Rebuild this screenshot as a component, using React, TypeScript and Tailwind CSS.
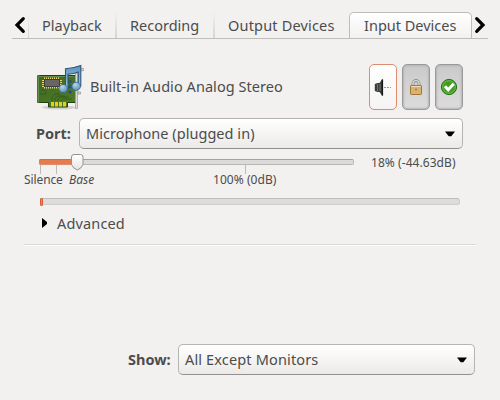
import type { ReactNode } from "react";

function Label({ className = "", children }: { className?: string; children: ReactNode }) {
  return <span className={`block whitespace-nowrap ${className}`}>{children}</span>;
}

function TabArrow({ flip = false }: { flip?: boolean }) {
  return (
    <svg width="12" height="18" viewBox="0 0 12 18" className={flip ? "-scale-x-100" : ""}>
      <path d="M9.300 2.700 3 9l6.300 6.300" fill="none" stroke="#000" strokeWidth="3.200" strokeLinecap="round" />
    </svg>
  );
}

function TabDivider({ className = "" }: { className?: string }) {
  return <div className={`h-[26px] shrink-0 bg-linear-to-b from-[#f2f1f0] to-[#d6d4d2] ${className}`} />;
}

function SoundCardIcon() {
  return (
    <svg width="50" height="48" viewBox="0 0 50 48">
      <defs>
        <linearGradient id="board" x1="0" y1="0" x2="1" y2="1">
          <stop offset="0" stopColor="#3e6723" />
          <stop offset="1" stopColor="#4f7c28" />
        </linearGradient>
        <radialGradient id="note" cx=".4" cy=".3" r=".7">
          <stop offset="0" stopColor="#b9d6ec" />
          <stop offset="1" stopColor="#5b8fba" />
        </radialGradient>
        <linearGradient id="beam" x1="0" y1="0" x2="0" y2="1">
          <stop offset="0" stopColor="#5b93bd" />
          <stop offset="1" stopColor="#a9cbe2" />
        </linearGradient>
      </defs>
      <ellipse cx="23" cy="43.500" rx="17" ry="2" fill="#000" opacity=".13" />
      <path d="M3.500 11.500h36v27h-8v4.500h-19v-4.500h-9z" fill="url(#board)" stroke="#1f420d" />
      <path d="M1.500 11.500h4v27h-4z" fill="#41691f" stroke="#1f420d" strokeWidth=".6" />
      <path d="M2 12h37v26H2z" fill="url(#board)" />
      <path d="M2.500 37.500v-25h35" fill="none" stroke="#668c4b" />
      <path d="M4 30h6v-3M5 26h4M16 37v-4l3-3h5M19 37v-3l3-2h7M22 37v-2l3-2h8M25 37l2-2h9" fill="none" stroke="#2d5218" strokeWidth=".7" />
      <path d="M8 14.500h16M8 23.500h16" stroke="#e8d876" strokeWidth="2" strokeDasharray="1 1" />
      <path d="M7 16v7M25 16v7" stroke="#e8d876" strokeWidth="2" strokeDasharray="1 1" />
      <rect x="8.500" y="15.500" width="15" height="7" fill="#666" stroke="#3d3d3d" />
      <path d="M15 38h3v4.500h-3zM19 38h3v4.500h-3zM23 38h3v4.500h-3zM27 38h3v4.500h-3z" fill="#e6cf18" />
      <path d="M39.500 9h2v35.500h-2z" fill="#d9dad8" stroke="#a3a5a3" strokeWidth=".8" />
      <path d="M45 4.500h2.500v2.200H45zM42 28h2.500v2H42z" fill="#dcdddb" stroke="#9b9d9b" strokeWidth=".8" />
      <g fill="#2d5a9c" stroke="#183b73" strokeWidth=".5">
        <circle cx="34" cy="17.500" r="1.300" />
        <circle cx="34" cy="22.500" r="1.300" />
        <circle cx="34" cy="28" r="1.300" />
      </g>
      <path d="M29.500 4.700Q37 4.500 44.800 1.500v20.500h-2.500V8Q38 10 32 10.200v14.300h-2.500z" fill="url(#beam)" stroke="#2a567b" strokeWidth="1.100" />
      <ellipse cx="27.200" cy="24.500" rx="4.300" ry="4.100" fill="url(#note)" stroke="#34678f" strokeWidth=".8" />
      <ellipse cx="40.200" cy="22.300" rx="4.300" ry="4.100" fill="url(#note)" stroke="#34678f" strokeWidth=".8" />
    </svg>
  );
}

function SpeakerIcon() {
  return (
    <svg width="18" height="18" viewBox="0 0 18 18">
      <path d="M.8 6 3.500 5v9L.8 13zM3 5h2.500L8 1.500h1v16H8L5.500 14H3z" fill="#3a3e3c" />
      <path d="M3.500 6v7M6 6v7" stroke="#858885" strokeWidth=".8" />
      <path d="M8.400 1.500v16" stroke="#161816" strokeWidth="1.400" />
      <path d="M10 9.500h7" stroke="#999" strokeDasharray="2 1" />
    </svg>
  );
}

function LockIcon() {
  return (
    <svg width="14" height="18" viewBox="0 0 14 18">
      <path d="M4 9V5.500a3 3 0 0 1 6 0V9" fill="none" stroke="#8f918e" strokeWidth="2.800" />
      <path d="M4 9V5.500a3 3 0 0 1 6 0V9" fill="none" stroke="#dedfdd" strokeWidth="1.200" />
      <rect x="1.500" y="7.500" width="11" height="9" rx=".7" fill="#d9b273" stroke="#a1783a" />
      <path d="M2.500 8.500h9" stroke="#f3deb6" />
      <circle cx="7" cy="11.500" r="1" fill="#a97e40" />
    </svg>
  );
}

function CheckIcon() {
  return (
    <svg width="18" height="18" viewBox="0 0 18 18">
      <circle cx="9" cy="9" r="7.600" fill="#429c24" stroke="#277010" />
      <circle cx="9" cy="9" r="6.300" fill="none" stroke="#79bd5b" strokeWidth=".9" />
      <path d="m5 8.300 3.200 3.400 5.500-6" fill="none" stroke="#fff" strokeWidth="3" />
    </svg>
  );
}

const pressed =
  "border-[#9b9a99] bg-linear-to-b from-[#cbcaca] to-[#dddcdc] shadow-[inset_0_0_2px_1px_#b5b4b3]";

function IconButton({ look, children }: { look: string; children: ReactNode }) {
  return (
    <button className={`flex h-[46px] w-7 items-center justify-center rounded-[5px] border ${look}`}>
      {children}
    </button>
  );
}

function Select({ className, children }: { className: string; children: ReactNode }) {
  return (
    <div
      className={`flex h-[31px] items-center justify-between rounded-[5px] border border-[#b6b4b2] border-b-[#92908e] bg-linear-to-b from-white to-[#ebeae8] pr-[7px] pl-1.5 ${className}`}
    >
      {children}
      <svg width="10" height="6" viewBox="0 0 10 6">
        <path d="M0 .5h10L6.300 5.200H3.700z" fill="#000" />
      </svg>
    </div>
  );
}

export default function App() {
  return (
    <main className="flex h-[400px] w-[500px] flex-col overflow-hidden bg-[#f2f1f0] pt-3 font-['Noto_Sans',sans-serif] text-[14.5px] leading-5 text-[#4c4c4c]">
      <nav className="mx-3 flex h-[27px] items-stretch border-b border-[#bfbdbb]">
        <div className="flex w-4 items-center pl-0.5">
          <TabArrow />
        </div>
        <TabDivider className="w-px" />
        <div className="flex w-[86px] items-center pl-[13px]">
          <Label>Playback</Label>
        </div>
        <TabDivider className="w-0.5" />
        <div className="flex w-24 items-center pl-[13px]">
          <Label>Recording</Label>
        </div>
        <TabDivider className="w-0.5" />
        <div className="flex w-[134px] items-center pl-[13px]">
          <Label className="tracking-[0.18px]">Output Devices</Label>
        </div>
        <div className="flex h-[26px] w-[123px] items-center rounded-t-[5px] border border-b-0 border-[#bfbdbb] bg-linear-to-b from-white to-[#f2f1f0] pb-px pl-[14px]">
          <Label>Input Devices</Label>
        </div>
        <div className="flex items-center pl-0.5">
          <TabArrow flip />
        </div>
      </nav>

      <section className="mx-6 h-[206px] border-b border-[#dcdad8] pt-[25px] shadow-[0_1px_0_#fff]">
        <header className="flex h-[46px] items-start pl-3">
          <SoundCardIcon />
          <Label className="mt-3 ml-1 w-[279px] tracking-[0.06px]">Built-in Audio Analog Stereo</Label>
          <div className="flex gap-[5px]">
            <IconButton look="border-[#dc8c6f] bg-linear-to-b from-white to-[#f5f4f2]">
              <SpeakerIcon />
            </IconButton>
            <IconButton look={pressed}>
              <LockIcon />
            </IconButton>
            <IconButton look={pressed}>
              <CheckIcon />
            </IconButton>
          </div>
        </header>

        <div className="mt-2 flex items-center pl-3">
          <Label className="w-[43px] pb-px font-bold">Port:</Label>
          <Select className="w-96">
            <Label className="pb-0.5 tracking-[0.04px]">Microphone (plugged in)</Label>
          </Select>
        </div>

        <div className="flex h-[46px] pl-[15px]">
          <div className="w-[332px]">
            <div className="relative mt-2.5 h-1.5 w-[315px] rounded-[2px] border border-[#b9b7b5] border-t-[#a5a3a1] bg-[#dddbda]">
              <div className="-mt-px -ml-px h-1.5 w-9 rounded-l-[2px] border-y border-[#df8c6d] border-t-[#cc704d] bg-[#e57c51]" />
              <svg className="absolute -top-1.5 left-[31px]" width="13" height="17" viewBox="0 0 13 17">
                <defs>
                  <linearGradient id="knob" x1="0" y1="0" x2="0" y2="1">
                    <stop offset="0" stopColor="#fff" />
                    <stop offset="1" stopColor="#e7e5e4" />
                  </linearGradient>
                </defs>
                <path d="M3 .5h6.500a2.500 2.500 0 0 1 2.500 2.500v7.500q-1.500 4-5.700 5.500Q2 14.500.5 10.500V3A2.500 2.500 0 0 1 3 .5z" fill="url(#knob)" stroke="#96938f" />
              </svg>
            </div>
            <div className="flex h-[9px] pl-px">
              <i className="w-px bg-[#bdbbb9]" />
              <i className="ml-[15px] w-px bg-[#bdbbb9]" />
              <i className="ml-[188px] w-px bg-[#bdbbb9]" />
            </div>
            <div className="-ml-[15px] flex h-[11px] items-center text-[12px]">
              <Label className="w-[45px] tracking-[-0.1px]">Silence</Label>
              <Label className="w-36 italic">Base</Label>
              <Label className="tracking-[0.05px]">100% (0dB)</Label>
            </div>
          </div>
          <Label className="mt-1 text-[12px] tracking-[0.06px]">18% (-44.63dB)</Label>
        </div>

        <div className="mt-[3px] ml-4 h-[7px] w-[420px] rounded-[3px] border border-[#d0cecc] border-t-[#bfbdbb] bg-[#dddcdb]">
          <div className="-mt-px -ml-px h-[8px] w-[3px] rounded-[1px] border border-[#d2603a] bg-[#eb855e]" />
        </div>

        <div className="mt-2 flex items-center pl-[18px]">
          <svg width="5" height="10" viewBox="0 0 5 10">
            <path d="M0 0 5 4v2L0 10z" fill="#000" />
          </svg>
          <Label className="ml-2.5 tracking-[0.15px]">Advanced</Label>
        </div>
      </section>

      <footer className="mt-[99px] flex items-center pl-32">
        <Label className="w-[50px] pb-0.5 font-bold">Show:</Label>
        <Select className="w-[297px]">
          <Label className="pb-0.5 tracking-[0.15px]">All Except Monitors</Label>
        </Select>
      </footer>
    </main>
  );
}
